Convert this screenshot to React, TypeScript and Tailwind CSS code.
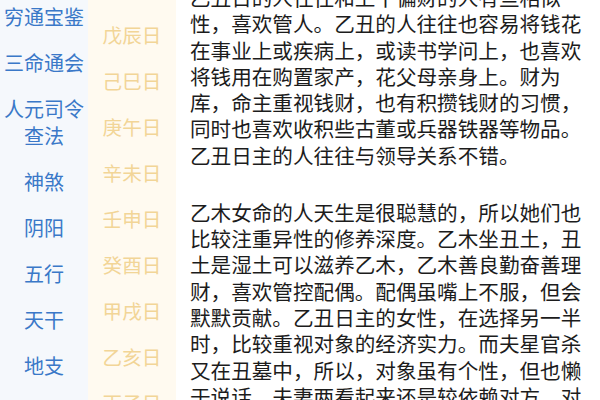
import React from "react";

const topics = [
  ["穷通宝鉴"],
  ["三命通会"],
  ["人元司令", "查法"],
  ["神煞"],
  ["阴阳"],
  ["五行"],
  ["天干"],
  ["地支"],
  ["纳音"],
];

const days = ["戊辰日", "己巳日", "庚午日", "辛未日", "壬申日", "癸酉日", "甲戌日", "乙亥日", "丙子日"];

const paragraphs = [
  "乙丑日的人往往和上干偏财的人有些相似性，喜欢管人。乙丑的人往往也容易将钱花在事业上或疾病上，或读书学问上，也喜欢将钱用在购置家产，花父母亲身上。财为库，命主重视钱财，也有积攒钱财的习惯，同时也喜欢收积些古董或兵器铁器等物品。乙丑日主的人往往与领导关系不错。",
  "乙木女命的人天生是很聪慧的，所以她们也比较注重异性的修养深度。乙木坐丑土，丑土是湿土可以滋养乙木，乙木善良勤奋善理财，喜欢管控配偶。配偶虽嘴上不服，但会默默贡献。乙丑日主的女性，在选择另一半时，比较重视对象的经济实力。而夫星官杀又在丑墓中，所以，对象虽有个性，但也懒于说话，夫妻两看起来还是较依赖对方，对方也会包容她。",
];

export default function App() {
  return (
    <div
      className="flex h-[400px] w-[600px] overflow-hidden bg-white"
      style={{ fontFamily: '"Noto Sans CJK SC", "Noto Sans", sans-serif' }}
    >
      {/* category menu */}
      <div className="w-[88px] shrink-0 bg-[#f5f8fc]">
        <div className="-mt-[6.5px]">
          {topics.map((lines) => (
            <div
              key={lines.join("")}
              className="flex flex-col items-center justify-center py-[9.5px] text-[20px] leading-[27px] text-[#3a78c8]"
            >
              {lines.map((l) => (
                <span key={l}>{l}</span>
              ))}
            </div>
          ))}
        </div>
      </div>

      {/* day pillars */}
      <div className="w-[88px] shrink-0 bg-[#fffaf0]">
        <div className="mt-[12px]">
          {days.map((d) => (
            <div
              key={d}
              className="flex h-[46px] items-center justify-center text-[19.6px] text-[#f2d597]"
            >
              {d}
            </div>
          ))}
        </div>
      </div>

      {/* article */}
      <div className="flex-1 pl-[14px] pr-[10px]">
        <div className="-mt-[16px] flex flex-col gap-[30.7px] text-[20.6px] leading-[26.3px] text-[#1c1c1c]">
          {paragraphs.map((p, i) => (
            <p key={i}>{p}</p>
          ))}
        </div>
      </div>
    </div>
  );
}
